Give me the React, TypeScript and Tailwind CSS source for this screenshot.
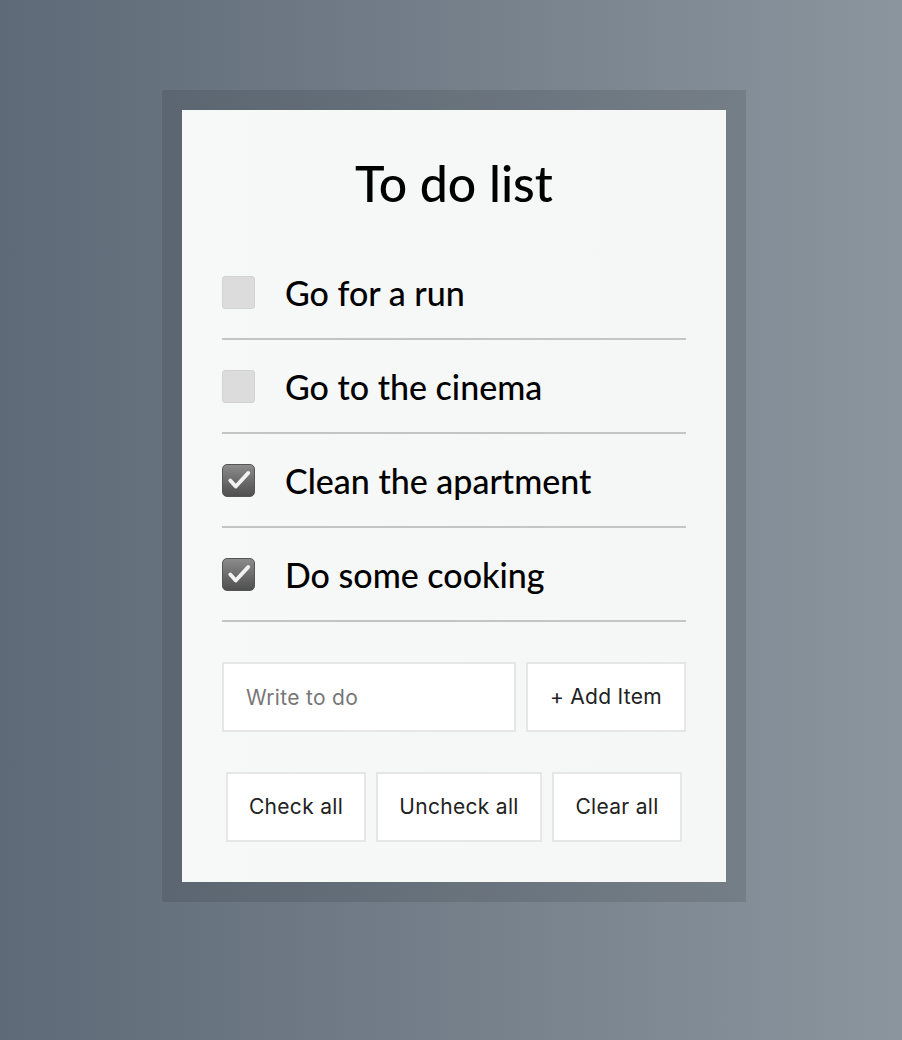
import React, { useState } from 'react'

interface Todo {
  id: number
  text: string
  done: boolean
}

const initialTodos: Todo[] = [
  { id: 1, text: 'Go for a run', done: false },
  { id: 2, text: 'Go to the cinema', done: false },
  { id: 3, text: 'Clean the apartment', done: true },
  { id: 4, text: 'Do some cooking', done: true }
]

const Box = ({ checked, onClick }: { checked: boolean; onClick: () => void }) => {
  if (!checked) {
    return (
      <button
        type="button"
        onClick={onClick}
        className="w-[33px] h-[33px] shrink-0 rounded-[3px] bg-[#dcdcdc] border border-[#d2d2d2]"
      />
    )
  }
  return (
    <button
      type="button"
      onClick={onClick}
      className="w-[33px] h-[33px] shrink-0 rounded-[5px] bg-gradient-to-b from-[#8c8c8c] to-[#4f4f4f] border border-[#555] flex items-center justify-center"
    >
      <svg viewBox="0 0 24 24" className="w-[26px] h-[26px]">
        <path
          d="M4 12.5l5 5.5L20.5 5.5"
          fill="none"
          stroke="#f2f2f2"
          strokeWidth={3.6}
          strokeLinecap="round"
          strokeLinejoin="round"
        />
      </svg>
    </button>
  )
}

const App = () => {
  const [todos, setTodos] = useState<Todo[]>(initialTodos)
  const [text, setText] = useState('')

  const toggle = (id: number) => {
    setTodos(prev => prev.map(t => (t.id === id ? { ...t, done: !t.done } : t)))
  }

  const addItem = () => {
    if (!text.trim()) return
    setTodos(prev => [...prev, { id: Date.now(), text: text.trim(), done: false }])
    setText('')
  }

  const btn =
    'h-[70px] bg-white border-2 border-[#e6e6e6] text-[21px] tracking-[0.3px] text-[#222] font-["Inter",sans-serif]'

  return (
    <div className="min-h-screen bg-gradient-to-r from-[#5e6a77] to-[#8b959e] flex justify-center pt-[90px] pl-[6px]">
      <div className="self-start p-5 bg-black/10">
        <div className="w-[544px] px-10 pt-10 pb-10 bg-gradient-to-r from-[#f7f8f8] to-[#f5f6f6]">
          <h1 className="h-[66px] leading-[66px] text-center text-[50px] font-medium text-black font-['Lato',sans-serif]">
            To do list
          </h1>

          <ul className="mt-[30px]">
            {todos.map(t => (
              <li
                key={t.id}
                className="h-[94px] flex items-center gap-[30px] border-b-2 border-[#c4c4c4]"
              >
                <Box checked={t.done} onClick={() => toggle(t.id)} />
                <span className="text-[34px] font-medium text-black font-['Lato',sans-serif]">{t.text}</span>
              </li>
            ))}
          </ul>

          <div className="mt-10 flex gap-[10px]">
            <input
              value={text}
              onChange={e => setText(e.target.value)}
              placeholder="Write to do"
              className="flex-1 min-w-0 h-[70px] bg-white border-2 border-[#e6e6e6] pl-[22px] text-[21px] tracking-[0.3px] text-[#222] placeholder:text-[#777] outline-none font-['Inter',sans-serif]"
            />
            <button type="button" onClick={addItem} className={`${btn} w-[160px]`}>
              + Add Item
            </button>
          </div>

          <div className="mt-10 flex justify-center gap-[10px]">
            <button
              type="button"
              onClick={() => setTodos(prev => prev.map(t => ({ ...t, done: true })))}
              className={`${btn} w-[140px]`}
            >
              Check all
            </button>
            <button
              type="button"
              onClick={() => setTodos(prev => prev.map(t => ({ ...t, done: false })))}
              className={`${btn} w-[166px]`}
            >
              Uncheck all
            </button>
            <button type="button" onClick={() => setTodos([])} className={`${btn} w-[130px]`}>
              Clear all
            </button>
          </div>
        </div>
      </div>
    </div>
  )
}

export default App
